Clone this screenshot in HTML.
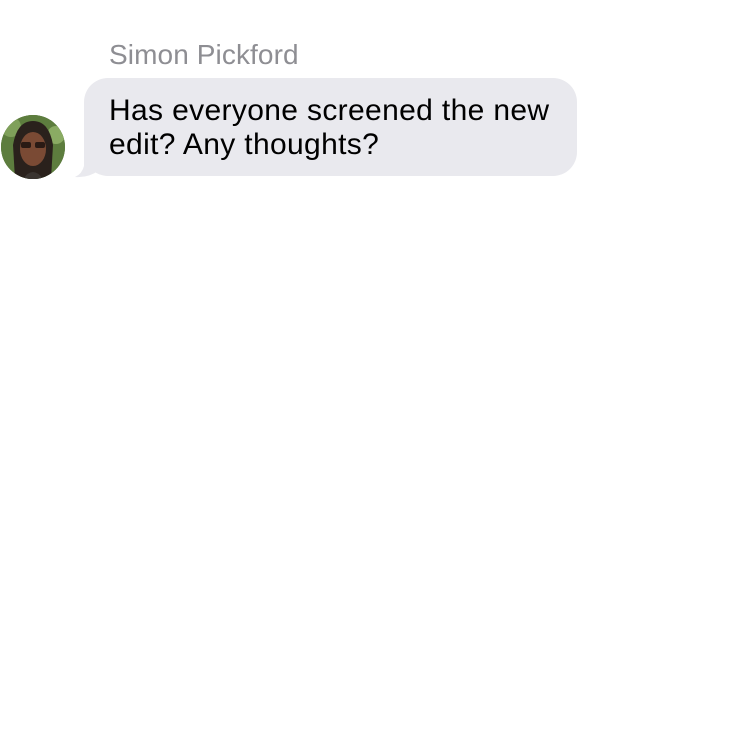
<!DOCTYPE html>
<html><head><style>
body{margin:0;width:736px;height:736px;background:#fff;position:relative;overflow:hidden;font-family:"Liberation Sans",sans-serif}
.name{position:absolute;left:109px;top:41px;font-size:28px;line-height:28px;color:#8e8e93;white-space:nowrap;letter-spacing:0.1px}
.bubble{position:absolute;left:84px;top:78px;width:493px;height:98px;background:#e9e9ee;border-radius:24px}
.txt{position:absolute;left:109px;top:94px;font-size:30px;line-height:34px;letter-spacing:0.35px;color:#000;white-space:nowrap}
.av{position:absolute;left:1px;top:115px;width:64px;height:64px;border-radius:50%;overflow:hidden;background:#4d6b36}
</style></head><body>
<div class="name">Simon Pickford</div>
<svg style="position:absolute;left:70px;top:150px" width="40" height="30"><path d="M14 0 L14 16 Q12 24 5 27 Q18 28 28 21 L40 0 Z" fill="#e9e9ee"/></svg>
<div class="bubble"></div>
<div class="txt">Has everyone screened the new<br>edit? Any thoughts?</div>
<div class="av"><svg width="64" height="64">
<rect width="64" height="64" fill="#5d7d3e"/>
<circle cx="10" cy="12" r="10" fill="#7fa05a"/><circle cx="55" cy="20" r="9" fill="#8aab63"/>
<path d="M14 64 L12 30 Q16 6 32 6 Q48 6 52 30 L50 64 Z" fill="#2a211c"/>
<ellipse cx="32" cy="34" rx="13" ry="17" fill="#7a4a34"/>
<rect x="20" y="27" width="10" height="6" rx="2" fill="#2a1a14"/><rect x="34" y="27" width="10" height="6" rx="2" fill="#2a1a14"/>
<path d="M22 64 Q32 50 42 64Z" fill="#3a3430"/>
</svg></div>
</body></html>
